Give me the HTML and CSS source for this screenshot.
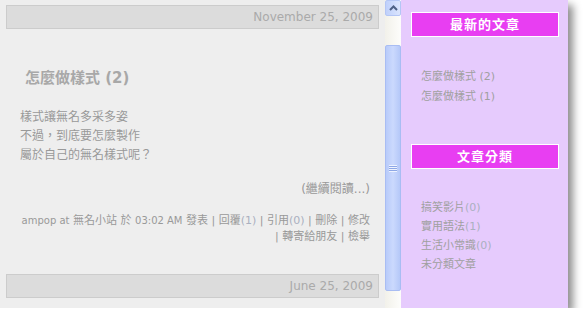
FILE: index.html
```html
<!DOCTYPE html>
<html lang="zh-Hant">
<head>
    <meta charset="UTF-8">
    <title>無名小站</title>
    <link rel="stylesheet" href="styles.css">
</head>
<body>
    <div class="window">
        <div class="main">
            <div class="date-bar">November 25, 2009</div>
            <div class="post">
                <h2 class="post-title">怎麼做樣式 (2)</h2>
                <div class="post-body">
                    <p>樣式讓無名多采多姿</p>
                    <p>不過，到底要怎麼製作</p>
                    <p>屬於自己的無名樣式呢？</p>
                </div>
                <div class="read-more">(繼續閱讀...)</div>
                <div class="post-footer">
                    <span class="latin">ampop at</span> 無名小站 於 <span class="latin">03:02 AM</span> 發表 | 回覆<span class="num">(1)</span> | 引用<span class="num">(0)</span> | 刪除 | 修改<br>
                    | 轉寄給朋友 | 檢舉
                </div>
            </div>
            <div class="date-bar">June 25, 2009</div>
        </div>

        <div class="scrollbar">
            <div class="scroll-btn">
                <svg width="9" height="6" viewBox="0 0 9 6"><path d="M1 5 L4.5 1.5 L8 5" fill="none" stroke="#4d6185" stroke-width="2"/></svg>
            </div>
            <div class="scroll-track">
                <div class="scroll-thumb">
                    <div class="grip"></div>
                </div>
            </div>
        </div>

        <div class="sidebar">
            <div class="side-title">最新的文章</div>
            <ul class="side-list recent">
                <li>怎麼做樣式 (2)</li>
                <li>怎麼做樣式 (1)</li>
            </ul>
            <div class="side-title second">文章分類</div>
            <ul class="side-list cats">
                <li>搞笑影片<span class="num">(0)</span></li>
                <li>實用語法<span class="num">(1)</span></li>
                <li>生活小常識<span class="num">(0)</span></li>
                <li>未分類文章</li>
            </ul>
        </div>
    </div>
</body>
</html>
```

FILE: styles.css
```css
* {
    margin: 0;
    padding: 0;
    box-sizing: border-box;
}
body {
    background: #ffffff;
    font-family: "DejaVu Sans", "Noto Sans CJK TC", sans-serif;
    color: #999;
}
.window {
    display: flex;
    width: 568px;
    height: 308px;
    overflow: hidden;
    box-shadow: 5px 5px 8px rgba(0, 0, 0, 0.45);
}
.main {
    width: 385px;
    background: #eeeeee;
    padding: 5px 6px 0 6px;
    overflow: hidden;
}
.date-bar {
    height: 24px;
    background: #dcdcdc;
    border: 1px solid #cccccc;
    text-align: right;
    font-size: 12px;
    line-height: 22px;
    padding-right: 5px;
    color: #aaaaaa;
}
.post {
    padding: 39px 9px 29px 14px;
}
.post-title {
    font-family: "DejaVu Sans", "Noto Sans CJK TC", sans-serif;
    font-size: 15px;
    font-weight: bold;
    line-height: 20px;
    color: #a8a8a8;
    padding-left: 5px;
}
.post-body {
    margin-top: 20px;
    font-size: 12px;
    line-height: 19px;
    color: #999;
}
.read-more {
    margin-top: 16px;
    text-align: right;
    font-size: 12px;
    line-height: 16px;
    color: #999;
}
.post-footer {
    margin-top: 16px;
    text-align: right;
    font-size: 11px;
    line-height: 16px;
    color: #999;
    white-space: nowrap;
}
.latin {
    font-size: 10px;
}
.num {
    color: #aab0c0;
}
.scrollbar {
    width: 16px;
    display: flex;
    flex-direction: column;
    background: linear-gradient(90deg, #f2f1ea, #fdfdfb);
}
.scroll-btn {
    height: 16px;
    display: flex;
    align-items: center;
    justify-content: center;
    background: linear-gradient(90deg, #bfd0fb, #dbe5fd);
    border: 1px solid #b4c6f5;
    border-radius: 2px;
}
.scroll-track {
    flex: 1;
    padding: 29px 0 17px 0;
}
.scroll-thumb {
    height: 100%;
    background: linear-gradient(90deg, #b8cbfa, #cbd9fd 50%, #b5c8f8);
    border: 1px solid #a9bdf3;
    border-radius: 2px;
    display: flex;
    align-items: center;
    justify-content: center;
}
.grip {
    width: 8px;
    height: 7px;
    background: repeating-linear-gradient(180deg, #eef3ff 0 1px, #8ea8e6 1px 2px);
}
.sidebar {
    width: 167px;
    background: #e6cbfd;
    padding: 12px 9px 0 10px;
}
.side-title {
    height: 25px;
    background: #e83ef2;
    border: 1px solid #ffffff;
    color: #ffffff;
    font-weight: bold;
    font-size: 13px;
    line-height: 23px;
    text-align: center;
    letter-spacing: 1px;
}
.side-list {
    list-style: none;
    padding-left: 10px;
    font-size: 11px;
    color: #a0a0a0;
}
.recent {
    margin-top: 30px;
    line-height: 20px;
}
.second {
    margin-top: 37px;
}
.cats {
    margin-top: 29px;
    line-height: 19px;
}
```
